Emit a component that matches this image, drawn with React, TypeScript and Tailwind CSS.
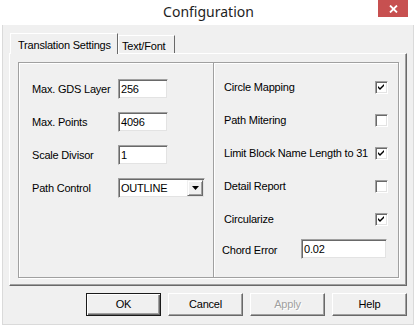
import React from "react";

function TextBox({ value, w }: { value: string; w: string }) {
  return (
    <div
      className={`${w} h-[20px] bg-white border border-t-[#a0a0a0] border-l-[#a0a0a0] border-r-[#f0f0f0] border-b-[#f0f0f0] shadow-[inset_1px_1px_0_#696969,inset_-1px_-1px_0_#e3e3e3] flex items-center pl-[2px] leading-none`}
    >
      {value}
    </div>
  );
}

function CheckBox({ checked }: { checked: boolean }) {
  return (
    <div className="w-[13px] h-[13px] bg-white border border-t-[#a0a0a0] border-l-[#a0a0a0] border-r-white border-b-white shadow-[inset_1px_1px_0_#696969,inset_-1px_-1px_0_#e3e3e3] flex items-center justify-center">
      {checked && (
        <svg width="7" height="7" viewBox="0 0 7 7">
          <path d="M0 2 L2 4 L2 6 L0 4 Z M2 4 L6 0 L6 2 L2 6 Z" fill="#000" />
        </svg>
      )}
    </div>
  );
}

function Btn({ label, primary, disabled }: { label: string; primary?: boolean; disabled?: boolean }) {
  return (
    <div
      className={
        primary
          ? "w-[75px] h-[23px] flex items-center justify-center border border-[#1a1a1a] shadow-[inset_1px_1px_0_#fff,inset_-1px_-1px_0_#696969,inset_-2px_-2px_0_#a0a0a0]"
          : "w-[75px] h-[23px] flex items-center justify-center border border-t-white border-l-white border-r-[#696969] border-b-[#696969] shadow-[inset_-1px_-1px_0_#a0a0a0]"
      }
    >
      <span className={disabled ? "text-[#a0a0a0] [text-shadow:1px_1px_0_#fff]" : ""}>{label}</span>
    </div>
  );
}

export default function App() {
  const leftRows = [
    { label: "Max. GDS Layer", value: "256" },
    { label: "Max. Points", value: "4096" },
    { label: "Scale Divisor", value: "1" },
  ];
  const checks = [
    { label: "Circle Mapping", checked: true },
    { label: "Path Mitering", checked: false },
    { label: "Limit Block Name Length to 31", checked: true },
    { label: "Detail Report", checked: false },
    { label: "Circularize", checked: true },
  ];

  return (
    <div className="w-[417px] h-[327px] bg-white font-['Liberation_Sans',Arial,sans-serif] text-[11px] text-black tracking-[-0.2px] flex flex-col">
      {/* title bar */}
      <div className="relative h-[25px] shrink-0 flex items-center justify-center">
        <span className="font-['Noto_Sans',sans-serif] text-[14px] text-[#1e1e1e] tracking-normal -mt-[3px]">
          Configuration
        </span>
        <div className="absolute top-0 right-[9px] w-[30px] h-[17px] bg-[#c75050] flex items-center justify-center">
          <svg width="9" height="8" viewBox="0 0 9 8">
            <path d="M1 0.5 L8 7.5 M8 0.5 L1 7.5" stroke="#fff" strokeWidth="1.8" />
          </svg>
        </div>
      </div>

      {/* client area */}
      <div className="ml-[2px] w-[412px] h-[300px] border border-t-0 border-[#dadada] bg-[#f0f0f0] flex flex-col pl-[6px] pt-[8px]">
        {/* tabs */}
        <div className="h-[20px] flex items-end pl-[1px]">
          <div className="relative z-10 -mb-px h-[21px] w-[108px] bg-[#f0f0f0] border-t border-l border-r border-t-white border-l-white border-r-[#696969] pl-[7px] pt-[3px]">
            Translation Settings
          </div>
          <div className="h-[18px] w-[57px] border-t border-l border-r border-t-white border-l-white border-r-[#696969] pl-[3px] pt-[2px]">
            Text/Font
          </div>
        </div>

        {/* tab panel */}
        <div className="w-[398px] h-[233px] border border-t-white border-l-white border-r-[#696969] border-b-[#696969] shadow-[inset_-1px_-1px_0_#a0a0a0] pl-[8px] pt-[8px]">
          <div className="w-[381px] h-[216px] border border-[#a0a0a0] shadow-[1px_1px_0_#fff,inset_1px_1px_0_#fff] flex">
            {/* left column */}
            <div className="w-[195px] border-r border-[#a0a0a0] flex flex-col gap-[13px] pt-[16px] pl-[13px]">
              {leftRows.map((r) => (
                <div key={r.label} className="h-[20px] flex items-center">
                  <div className="w-[86px]">{r.label}</div>
                  <TextBox value={r.value} w="w-[50px]" />
                </div>
              ))}
              <div className="h-[20px] flex items-center">
                <div className="w-[86px]">Path Control</div>
                <div className="w-[87px] h-[20px] bg-white border border-t-[#a0a0a0] border-l-[#a0a0a0] border-r-[#f0f0f0] border-b-[#f0f0f0] shadow-[inset_1px_1px_0_#696969,inset_-1px_-1px_0_#e3e3e3] flex items-center pl-[2px] pr-[1px]">
                  <span className="flex-1">OUTLINE</span>
                  <div className="w-[16px] h-[16px] bg-[#f0f0f0] border border-t-[#f0f0f0] border-l-[#f0f0f0] border-r-[#696969] border-b-[#696969] shadow-[inset_1px_1px_0_#fff,inset_-1px_-1px_0_#a0a0a0] flex items-center justify-center">
                    <svg width="7" height="4" viewBox="0 0 7 4">
                      <path d="M0 0 H7 L3.5 4 Z" fill="#000" />
                    </svg>
                  </div>
                </div>
              </div>
            </div>

            {/* right column */}
            <div className="flex-1 shadow-[inset_1px_0_0_#fff] flex flex-col gap-[13px] pt-[14px] pl-[10px] pr-[10px]">
              {checks.map((c) => (
                <div key={c.label} className="h-[20px] flex items-center justify-between">
                  <span>{c.label}</span>
                  <CheckBox checked={c.checked} />
                </div>
              ))}
              <div className="h-[20px] flex items-center -ml-[2px] -mt-[3px]">
                <div className="w-[79px] pt-[3px]">Chord Error</div>
                <TextBox value="0.02" w="w-[86px]" />
              </div>
            </div>
          </div>
        </div>

        {/* buttons */}
        <div className="w-[398px] mt-[7px] flex justify-end gap-[7px]">
          <Btn label="OK" primary />
          <Btn label="Cancel" />
          <Btn label="Apply" disabled />
          <Btn label="Help" />
        </div>
      </div>
    </div>
  );
}
